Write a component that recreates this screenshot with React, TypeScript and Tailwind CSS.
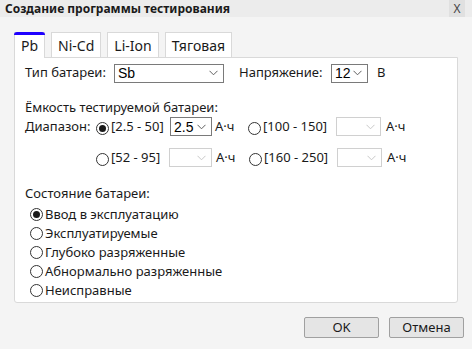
import React from "react";

const font = { fontFamily: '"Noto Sans", "Open Sans", sans-serif' };

function Chevron({ disabled }: { disabled?: boolean }) {
  return (
    <svg width="9" height="6" viewBox="0 0 9 6" className="shrink-0">
      <path d="M0.5 0.8 L4.5 4.8 L8.5 0.8" fill="none" stroke={disabled ? "#c8c8c8" : "#606060"} strokeWidth="1" />
    </svg>
  );
}

function Select({ value, w, disabled }: { value?: string; w: string; disabled?: boolean }) {
  return (
    <div
      className={`flex h-[19px] items-center justify-between border pl-[3px] pr-[5px] ${w} ${
        disabled ? "border-[#d0d0d0] bg-white" : "border-[#7a7a7a] bg-white"
      }`}
    >
      <span className="font-['Liberation_Sans',sans-serif] text-[14px] leading-none text-black">{value}</span>
      <Chevron disabled={disabled} />
    </div>
  );
}

function Radio({ checked }: { checked?: boolean }) {
  return (
    <span className="flex h-[13px] w-[13px] shrink-0 items-center justify-center rounded-full border border-[#333] bg-white">
      {checked && <span className="h-[7px] w-[7px] rounded-full bg-[#1a1a1a]" />}
    </span>
  );
}

const tabs = ["Pb", "Ni-Cd", "Li-Ion", "Тяговая"];
const states = ["Ввод в эксплуатацию", "Эксплуатируемые", "Глубоко разряженные", "Абнормально разряженные", "Неисправные"];

export default function App() {
  return (
    <div className="flex h-[349px] w-[472px] flex-col bg-[#f4f4f4] text-[13px] text-[#1a1a1a]" style={font}>
      <div className="flex h-[17px] items-center justify-between bg-[#ececec] pl-[5px] pr-[7px]">
        <span className="text-[12px] font-bold leading-none">Создание программы тестирования</span>
        <span className="flex h-[17px] w-[16px] items-center justify-center bg-[#e0e0e0] text-[12px] text-[#444]">X</span>
      </div>

      <div className="ml-[14px] mt-[15px] flex h-[25px] items-end gap-[6px]">
        {tabs.map((t, i) => (
          <div
            key={t}
            className={`relative flex h-[25px] items-center border border-b-0 border-[#d9d9d9] bg-white px-[6px] text-[14px] ${
              i === 0 ? "z-10 -mb-px h-[26px]" : ""
            }`}
          >
            {i === 0 && <span className="absolute -top-px left-[-1px] right-[-1px] h-[3px] rounded-t-sm bg-[#1f00ff]" />}
            {t}
          </div>
        ))}
      </div>

      <div className="ml-[14px] h-[246px] w-[444px] rounded-b-[3px] border border-[#d9d9d9] bg-white pl-[10px] pt-[5px]">
        <div className="flex h-[20px] items-center">
          <span className="w-[89px]">Тип батареи:</span>
          <Select value="Sb" w="w-[110px]" />
          <span className="ml-[15px] w-[92px]">Напряжение:</span>
          <Select value="12" w="w-[37px]" />
          <span className="ml-[9px]">В</span>
        </div>

        <div className="mt-[15px] leading-[19px]">Ёмкость тестируемой батареи:</div>
        <div className="flex h-[19px] items-center">
          <span className="w-[71px]">Диапазон:</span>
          <span className="mt-[3px]"><Radio checked /></span>
          <span className="ml-[2px] w-[59px]">[2.5 - 50]</span>
          <Select value="2.5" w="w-[42px]" />
          <span className="ml-[3px] w-[33px]">А·ч</span>
          <span className="mt-[3px]"><Radio /></span>
          <span className="ml-[2px] w-[73px]">[100 - 150]</span>
          <Select w="w-[45px]" disabled />
          <span className="ml-[5px]">А·ч</span>
        </div>
        <div className="mt-[12px] flex h-[19px] items-center pl-[71px]">
          <span className="mt-[3px]"><Radio /></span>
          <span className="ml-[2px] w-[58px]">[52 - 95]</span>
          <Select w="w-[43px]" disabled />
          <span className="ml-[4px] w-[33px]">А·ч</span>
          <span className="mt-[3px]"><Radio /></span>
          <span className="ml-[2px] w-[73px]">[160 - 250]</span>
          <Select w="w-[45px]" disabled />
          <span className="ml-[5px]">А·ч</span>
        </div>

        <div className="mt-[17px] leading-[19px]">Состояние батареи:</div>
        <div className="mt-[2px] flex flex-col pl-[5px]">
          {states.map((s, i) => (
            <div key={s} className="flex h-[19px] items-center gap-[2px]">
              <Radio checked={i === 0} />
              <span>{s}</span>
            </div>
          ))}
        </div>
      </div>

      <div className="mr-[8px] mt-[14px] flex justify-end gap-[10px]">
        <button className="h-[21px] w-[75px] rounded-[2px] border border-[#a0a0a0] bg-[#e5e5e5] text-[13px]">OK</button>
        <button className="h-[21px] w-[75px] rounded-[2px] border border-[#a0a0a0] bg-[#e5e5e5] text-[13px]">Отмена</button>
      </div>
    </div>
  );
}
